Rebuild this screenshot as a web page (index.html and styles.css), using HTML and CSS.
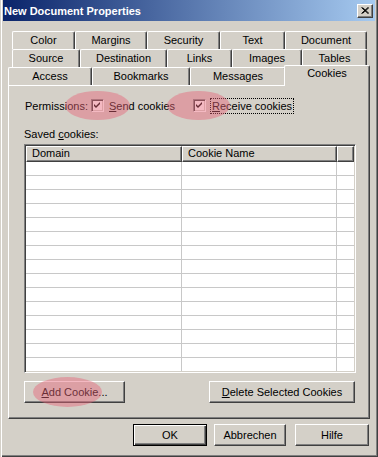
FILE: index.html
```html
<!DOCTYPE html>
<html>
<head>
<meta charset="utf-8">
<link rel="stylesheet" href="styles.css">
</head>
<body>
<div class="window">
  <div class="titlebar">
    <span class="title">New Document Properties</span>
    <span class="close"><svg width="8" height="7" viewBox="0 0 8 7"><path d="M0.5 0.5 L7 6.5 M1.5 0.5 L8 6.5 M7 0.5 L0.5 6.5 M8 0.5 L1.5 6.5" stroke="#000" stroke-width="1" fill="none"/></svg></span>
  </div>

  <div class="tabs">
    <div class="tabrow row1">
      <div class="tab">Color</div>
      <div class="tab">Margins</div>
      <div class="tab">Security</div>
      <div class="tab">Text</div>
      <div class="tab">Document</div>
    </div>
    <div class="tabrow row2">
      <div class="tab">Source</div>
      <div class="tab">Destination</div>
      <div class="tab">Links</div>
      <div class="tab">Images</div>
      <div class="tab">Tables</div>
    </div>
    <div class="tabrow row3">
      <div class="tab">Access</div>
      <div class="tab">Bookmarks</div>
      <div class="tab">Messages</div>
      <div class="tab selected">Cookies</div>
    </div>
  </div>

  <div class="panel">
    <div class="perm">
      <span class="perm-label">Permissions:</span>
      <span class="check first">
        <span class="box"><svg width="7" height="7" viewBox="0 0 7 7"><path d="M0 2 L2 4 L6 0 L6 2 L2 6 L0 4 Z" fill="#000"/></svg></span>
        <span class="ctext"><u>S</u>end cookies</span>
      </span>
      <span class="check">
        <span class="box"><svg width="7" height="7" viewBox="0 0 7 7"><path d="M0 2 L2 4 L6 0 L6 2 L2 6 L0 4 Z" fill="#000"/></svg></span>
        <span class="ctext focus"><u>R</u>eceive cookies</span>
      </span>
    </div>
    <div class="saved">Saved <u>c</u>ookies:</div>
    <div class="list">
      <div class="lhead">
        <div class="hcell">Domain</div>
        <div class="hcell">Cookie Name</div>
        <div class="hcell"></div>
      </div>
      <div class="lbody">
        <div class="lrow"><div></div><div></div><div></div></div>
        <div class="lrow"><div></div><div></div><div></div></div>
        <div class="lrow"><div></div><div></div><div></div></div>
        <div class="lrow"><div></div><div></div><div></div></div>
        <div class="lrow"><div></div><div></div><div></div></div>
        <div class="lrow"><div></div><div></div><div></div></div>
        <div class="lrow"><div></div><div></div><div></div></div>
        <div class="lrow"><div></div><div></div><div></div></div>
        <div class="lrow"><div></div><div></div><div></div></div>
        <div class="lrow"><div></div><div></div><div></div></div>
        <div class="lrow"><div></div><div></div><div></div></div>
        <div class="lrow"><div></div><div></div><div></div></div>
        <div class="lrow"><div></div><div></div><div></div></div>
        <div class="lrow"><div></div><div></div><div></div></div>
        <div class="lrow"><div></div><div></div><div></div></div>
      </div>
    </div>
    <div class="pbtns">
      <div class="btn add"><u>A</u>dd Cookie...</div>
      <div class="btn del"><u>D</u>elete Selected Cookies</div>
    </div>
  </div>

  <div class="dlgbtns">
    <div class="btn ok">OK</div>
    <div class="btn cancel">Abbrechen</div>
    <div class="btn help">Hilfe</div>
  </div>

  <div class="mark mark1"></div>
  <div class="mark mark2"></div>
  <div class="mark mark3"></div>
</div>
</body>
</html>
```
FILE: styles.css
```css
* { box-sizing: border-box; }
html, body { margin: 0; padding: 0; }
body {
  font-family: "Liberation Sans", Arial, sans-serif;
  font-size: 11px;
  color: #000;
  background: #d4d0c8;
}
.window {
  position: relative;
  width: 378px;
  height: 457px;
  background: #d4d0c8;
  box-shadow: inset 1px 0 #d4d0c8, inset 2px 0 #fff, inset -1px -1px #404040, inset -2px -2px #808080;
  overflow: hidden;
}
.titlebar {
  height: 21px;
  margin: 0 3px;
  background: linear-gradient(to right, #0a246a, #a6caf0);
  display: flex;
  align-items: center;
  justify-content: space-between;
  padding: 0 2px 0 1px;
}
.title {
  color: #fff;
  font-weight: bold;
  font-size: 11px;
}
.close {
  width: 16px;
  height: 14px;
  background: #d4d0c8;
  border: 1px solid;
  border-color: #fff #404040 #404040 #fff;
  box-shadow: inset -1px -1px #808080;
  display: flex;
  align-items: center;
  justify-content: center;
}
.tabs {
  margin-top: 10px;
}
.tabrow {
  display: grid;
  height: 18px;
}
.row1 { margin-left: 12px; grid-template-columns: 63px 72px 73px 65px 82px; }
.row2 { margin-left: 12px; grid-template-columns: 68px 87px 65px 70px 65px; }
.row3 { margin-left: 8px; grid-template-columns: 84px 98px 96px 82px; }
.tab {
  border-top: 1px solid #fff;
  border-left: 1px solid #fff;
  border-right: 1px solid #404040;
  box-shadow: inset -1px 0 #808080;
  border-radius: 2px 2px 0 0;
  background: #d4d0c8;
  text-align: center;
  line-height: 16px;
  white-space: nowrap;
}
.tab.selected {
  position: relative;
  z-index: 2;
  margin: -2px -2px -1px;
  line-height: 15px;
}
.panel {
  margin-left: 8px;
  width: 362px;
  height: 334px;
  border-top: 1px solid #fff;
  border-left: 1px solid #fff;
  border-right: 1px solid #404040;
  border-bottom: 1px solid #404040;
  box-shadow: inset -1px -1px #808080;
  padding: 11px 12px 0 15px;
}
.perm {
  display: flex;
  align-items: center;
  height: 17px;
}
.perm-label { width: 67px; padding-left: 1px; }
.check {
  display: flex;
  align-items: center;
}
.check.first { width: 102px; }
.box {
  width: 13px;
  height: 13px;
  background: #fff;
  border: 1px solid;
  border-color: #808080 #fff #fff #808080;
  box-shadow: inset 1px 1px #404040, inset -1px -1px #d4d0c8;
  display: flex;
  align-items: center;
  justify-content: center;
  margin-right: 3px;
}
.ctext { padding: 1px; border: 1px solid transparent; }
.ctext.focus { border: 1px dotted #000; margin-left: 1px; }
.saved {
  margin-top: 13px;
  height: 14px;
  line-height: 14px;
}
.list {
  margin-top: 3px;
  width: 332px;
  height: 229px;
  border: 1px solid;
  border-color: #808080 #fff #fff #808080;
  box-shadow: inset 1px 1px #404040, inset -1px -1px #d4d0c8;
  padding: 1px;
  background: #fff;
  overflow: hidden;
}
.lhead {
  display: grid;
  grid-template-columns: 156px 155px 17px;
  height: 16px;
}
.hcell {
  background: #d4d0c8;
  border-top: 1px solid #fff;
  border-left: 1px solid #fff;
  border-right: 1px solid #404040;
  border-bottom: 1px solid #404040;
  box-shadow: inset -1px -1px #808080;
  padding-left: 5px;
  line-height: 13px;
}
.lbody {
  height: 209px;
  overflow: hidden;
}
.lrow {
  display: grid;
  grid-template-columns: 156px 155px 17px;
  height: 14px;
  border-bottom: 1px solid #c8c8c8;
}
.lrow > div { border-right: 1px solid #c8c8c8; }
.lrow > div:nth-child(3) { border-right: none; }
.btn {
  height: 22px;
  background: #d4d0c8;
  border: 1px solid;
  border-color: #fff #404040 #404040 #fff;
  box-shadow: inset -1px -1px #808080;
  display: flex;
  align-items: center;
  justify-content: center;
}
.pbtns {
  margin-top: 8px;
  display: flex;
  justify-content: space-between;
  padding-right: 2px;
}
.add { width: 101px; }
.del { width: 146px; }
.dlgbtns {
  margin-top: 5px;
  display: flex;
  padding-left: 133px;
}
.ok {
  width: 74px;
  border: 1px solid #000;
  box-shadow: inset 1px 1px #fff, inset -1px -1px #404040, inset -2px -2px #808080;
}
.cancel { width: 72px; margin-left: 7px; }
.help { width: 74px; margin-left: 9px; }
.mark {
  position: absolute;
  border-radius: 50%;
  background: rgba(230, 100, 120, 0.45);
  filter: blur(0.6px);
  pointer-events: none;
}
.mark1 { left: 65px; top: 91px; width: 65px; height: 29px; }
.mark2 { left: 167px; top: 91px; width: 63px; height: 29px; }
.mark3 { left: 33px; top: 377px; width: 69px; height: 30px; }
```
